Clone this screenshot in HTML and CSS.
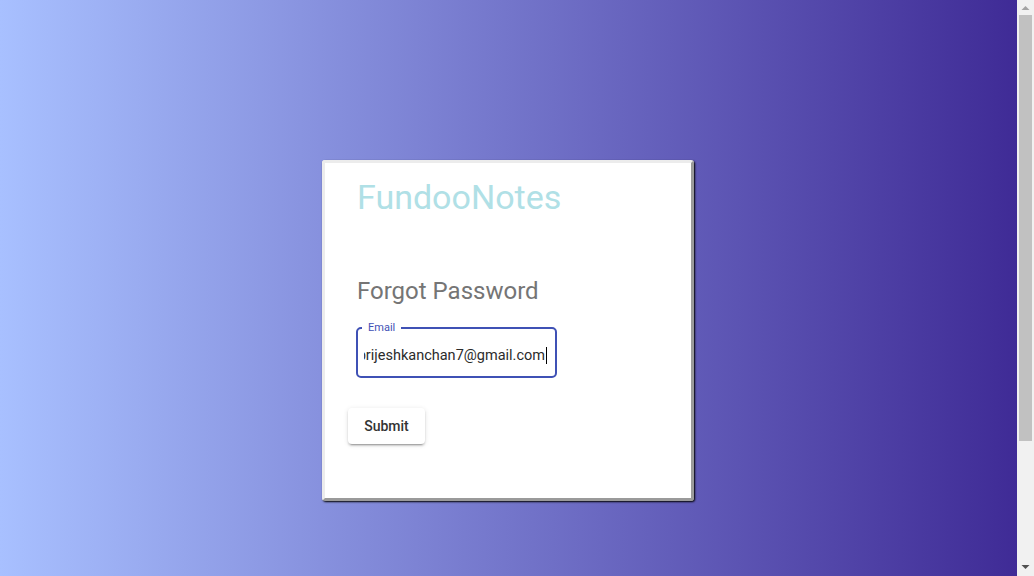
FILE: index.html
```html
<!DOCTYPE html>
<html lang="en">
<head>
<meta charset="utf-8">
<title>FundooNotes - Forgot Password</title>
<link rel="stylesheet" href="styles.css">
</head>
<body>
<div class="viewport">
  <main class="page">
    <section class="card">
      <h1 class="brand">FundooNotes</h1>
      <h2 class="heading">Forgot Password</h2>
      <div class="field">
        <span class="field-label">Email</span>
        <div class="field-input"><span class="field-value">brijeshkanchan7@gmail.com</span><span class="caret"></span></div>
      </div>
      <button class="submit" type="button">Submit</button>
    </section>
  </main>
  <div class="scrollbar" aria-hidden="true">
    <svg class="arrow" width="17" height="15" viewBox="0 0 17 15"><polygon points="4.5,10 8.5,6 12.5,10" fill="#a3a3a3"/></svg>
    <div class="track"><div class="thumb"></div></div>
    <svg class="arrow" width="17" height="15" viewBox="0 0 17 15"><polygon points="4.5,4 12.5,4 8.5,8" fill="#505050"/></svg>
  </div>
</div>
</body>
</html>
```
FILE: styles.css
```css
html, body {
  margin: 0;
  padding: 0;
}
body {
  font-family: Roboto, "Liberation Sans", Arial, sans-serif;
  overflow: hidden;
}
.viewport {
  display: flex;
  height: 576px;
}
.page {
  flex: 1;
  display: flex;
  justify-content: center;
  align-items: flex-start;
  padding-top: 160px;
  background: linear-gradient(to right, #a8c0ff, #3f2b96);
}
.card {
  box-sizing: border-box;
  width: 372px;
  height: 341px;
  margin-right: 1px;
  background: #fff;
  border-style: solid;
  border-width: 3px;
  border-color: #ececec #9a9a9a #9a9a9a #ececec;
  border-radius: 3px;
  box-shadow: 1px 1px 2px #000;
  padding: 12px 23px 0;
  display: flex;
  flex-direction: column;
  align-items: flex-start;
}
.brand {
  margin: 0 0 0 9px;
  font-size: 34px;
  font-weight: 400;
  line-height: 44px;
  color: #b0e0e6;
}
.heading {
  margin: 56px 0 0 9px;
  font-size: 24px;
  font-weight: 400;
  line-height: 32px;
  color: #757575;
}
.field {
  position: relative;
  margin: 20px 0 0 8px;
  box-sizing: border-box;
  width: 201px;
  height: 51px;
  border: 2px solid #3f51b5;
  border-radius: 5px;
}
.field-label {
  position: absolute;
  top: -8px;
  left: 4px;
  padding: 0 6px;
  background: #fff;
  font-size: 11px;
  line-height: 14px;
  color: #3f51b5;
}
.field-input {
  display: flex;
  justify-content: flex-end;
  align-items: center;
  overflow: hidden;
  box-sizing: border-box;
  margin: 0 8px 0 6px;
  padding-top: 6px;
  height: 47px;
  white-space: nowrap;
}
.field-value {
  font-size: 14.5px;
  color: #2b2b2b;
}
.caret {
  flex: none;
  display: inline-block;
  width: 1px;
  height: 17px;
  background: #000;
  margin-left: 1px;
}
.submit {
  margin: 30px 0 0 0;
  width: 77px;
  height: 36px;
  border: none;
  border-radius: 4px;
  background: #fff;
  box-shadow: 0 3px 1px -2px rgba(0,0,0,.2), 0 2px 2px 0 rgba(0,0,0,.14), 0 1px 5px 0 rgba(0,0,0,.12);
  font-family: Roboto, "Liberation Sans", Arial, sans-serif;
  font-size: 14px;
  font-weight: 500;
  color: #333;
  cursor: pointer;
}
.scrollbar {
  width: 17px;
  display: flex;
  flex-direction: column;
  background: #f1f1f1;
}
.arrow {
  display: block;
  flex: none;
}
.track {
  flex: 1;
  padding: 0 2px;
}
.thumb {
  height: 426px;
  background: #c1c1c1;
}
```
